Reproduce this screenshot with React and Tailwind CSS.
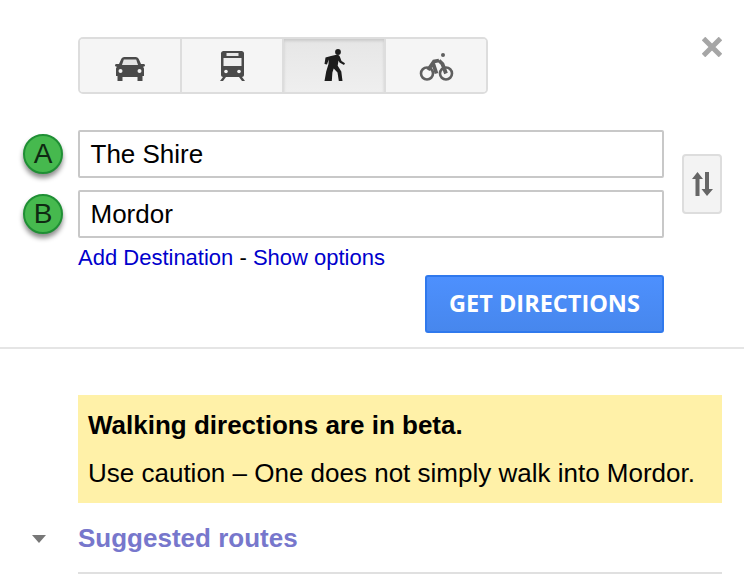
import React from 'react';

const CarIcon = () => (
  <svg width="30" height="24" viewBox="0 0 30 24" fill="#4a4a4a">
    <path d="M6 2.500C6.600 1 7.600 0 9.500 0h11c1.900 0 2.900 1 3.500 2.500L26 7h2.500c.9 0 1.500 .6 1.500 1.300 0 .9-.6 1.400-1.500 1.400H28c.5 .7 1 1.300 1 2.300V19h-1.500v5h-5v-4h-15v4h-5v-5H1v-7c0-1 .5-1.600 1-2.300h-.5C.6 9.700 0 9.200 0 8.300 0 7.600 .6 7 1.500 7H4z" />
    <path d="M7 8h16l-1.800-5.500H8.800z" fill="#e4e4e4" />
    <circle cx="5.500" cy="14" r="2" fill="#f3f3f3" />
    <circle cx="24.500" cy="14" r="2" fill="#f3f3f3" />
  </svg>
);

const BusIcon = () => (
  <svg width="25" height="30" viewBox="0 0 25 30" fill="#4a4a4a">
    <path d="M3.500 0h18C23 0 24 1 24 2.500V24c0 1.300-1 2-2 2H3c-1 0-2-.7-2-2V2.500C1 1 2 0 3.500 0z" />
    <path d="M6.500 2h12v3h-12z" fill="#e8e8e8" />
    <path d="M3.500 7h18v8h-18z" fill="#eeeeee" />
    <circle cx="6" cy="20.500" r="1.800" fill="#f3f3f3" />
    <circle cx="19" cy="20.500" r="1.800" fill="#f3f3f3" />
    <path d="M3 26h3l-3 4H0zM19 26h3l3 4h-3z" />
  </svg>
);

const WalkIcon = () => (
  <svg width="21" height="32" viewBox="0 0 21 32" fill="#1c1c1c">
    <circle cx="14" cy="3" r="2.900" />
    <path d="M7 7 12.500 5.800c1.500-.2 2.700 .4 3.300 1.700l1.700 4.500 3.500 2.200-1 1.800-4.500-2.600-1-2-.8 5.300 3.600 5.700 1.200 9.600h-3.700l-1.300-8.400-3.800-4.100-1.300 4.100-.6 8.400H.5l1.700-9.400 2.300-7.700.2-4.500L3 15.500 .5 15 1.500 8.500z" />
  </svg>
);

const BikeIcon = () => (
  <svg width="35" height="28" viewBox="0 0 35 28" fill="none" stroke="#5f5f5f">
    <circle cx="8" cy="20.500" r="6" strokeWidth="2.600" />
    <circle cx="27" cy="20.500" r="6" strokeWidth="2.600" />
    <path d="M9 17 15 8.500 20 7.500M14 10 17.500 20.500M20 7.500 23.500 11 27 20.500" strokeWidth="3.800" />
    <circle cx="24" cy="2" r="2" fill="#5f5f5f" stroke="none" />
  </svg>
);

const SwapIcon = () => (
  <svg width="21" height="24" viewBox="0 0 21 24" fill="#666666">
    <path d="M3.500 24V7H0L5.500 0 11 7H7.500v17z" />
    <path d="M13 0h4v17h4l-6 7-5.500-7H13z" />
  </svg>
);

const CloseIcon = () => (
  <svg width="20" height="20" viewBox="0 0 20 20" fill="none" stroke="#a6a6a6" strokeWidth="5">
    <path d="M1.500 1.500 18.500 18.500M18.500 1.500 1.500 18.500" />
  </svg>
);

const Marker = ({ letter }) => (
  <div className="w-[40px] h-[40px] rounded-full bg-[#46b94e] border-2 border-[#1f8f34] shadow-[0_4px_5px_rgba(0,0,0,0.45)] flex items-center justify-center text-[28px] leading-none text-[#0f2a12]">
    {letter}
  </div>
);

const modes = [
  { name: 'car', icon: <CarIcon /> },
  { name: 'bus', icon: <BusIcon /> },
  { name: 'walk', icon: <WalkIcon />, active: true },
  { name: 'bike', icon: <BikeIcon /> },
];

const Field = ({ letter, value }) => (
  <div className="flex items-center">
    <div className="w-[78px] pl-[23px] shrink-0">
      <Marker letter={letter} />
    </div>
    <div className="w-[586px] h-[48px] border-2 border-[#c8c8c8] rounded-[2px] bg-white flex items-center pl-[10.5px] text-[26px] text-black">
      {value}
    </div>
  </div>
);

const App = () => {
  return (
    <div className="w-[744px] h-[574px] overflow-hidden bg-white font-['Liberation_Sans',Arial,sans-serif]">
      <div className="h-[347px]">
        <div className="flex justify-between pt-[37px] pl-[78px] pr-[22px] h-[130px]">
          <div className="flex h-[57px] w-[410px] border-2 border-[#dddddd] rounded-[5px] overflow-hidden">
            {modes.map((m, i) => (
              <div
                key={m.name}
                className={
                  m.active
                    ? 'flex-1 flex items-end justify-center pb-[11px] bg-gradient-to-b from-[#e6e6e6] to-[#efefef] shadow-[inset_0_2px_3px_rgba(0,0,0,0.12)] border-r-2 border-[#dddddd]'
                    : i === 3
                      ? 'flex-1 flex items-end justify-center pb-[11px] bg-[#f5f5f5]'
                      : 'flex-1 flex items-end justify-center pb-[11px] bg-[#f5f5f5] border-r-2 border-[#dddddd]'
                }
              >
                {m.icon}
              </div>
            ))}
          </div>
          <div>
            <CloseIcon />
          </div>
        </div>

        <div className="flex">
          <div className="flex flex-col gap-[12px]">
            <Field letter="A" value="The Shire" />
            <Field letter="B" value="Mordor" />
          </div>
          <div className="ml-[18px] mt-[24px] w-[40px] h-[60px] border-2 border-[#dddddd] rounded-[4px] bg-[#f3f3f3] flex items-center justify-center">
            <SwapIcon />
          </div>
        </div>

        <div className="pl-[78px] pt-[7px] text-[22px] leading-[26px] text-black">
          <span className="text-[#0000cc]">Add Destination</span> - <span className="text-[#0000cc]">Show options</span>
        </div>

        <div className="pl-[425px] pt-[4px]">
          <button className="w-[239px] h-[58px] rounded-[3px] border-2 border-[#3079ed] bg-gradient-to-b from-[#4d90fe] to-[#4787ed] text-white font-['Open_Sans',sans-serif] font-bold text-[23.5px]">
            GET DIRECTIONS
          </button>
        </div>
      </div>

      <div className="h-[2px] bg-[#e5e5e5]" />

      <div className="pl-[78px] pr-[22px] pt-[46px]">
        <div className="h-[108px] bg-[#fff1a8] px-[10px] pt-[15px] text-black">
          <p className="text-[26px] leading-[30px] font-bold">Walking directions are in beta.</p>
          <p className="text-[26px] leading-[30px] mt-[18px]">Use caution – One does not simply walk into Mordor.</p>
        </div>
        <div className="relative h-[71px] pt-[20px] text-[26px] leading-[30px] font-bold text-[#7777cc] border-b-2 border-[#e0e0e0]">
          <svg className="absolute left-[-46px] top-[32px]" width="14" height="8" viewBox="0 0 14 8" fill="#777777">
            <path d="M0 0h14L7 8z" />
          </svg>
          Suggested routes
        </div>
      </div>
    </div>
  );
};

export default App;
